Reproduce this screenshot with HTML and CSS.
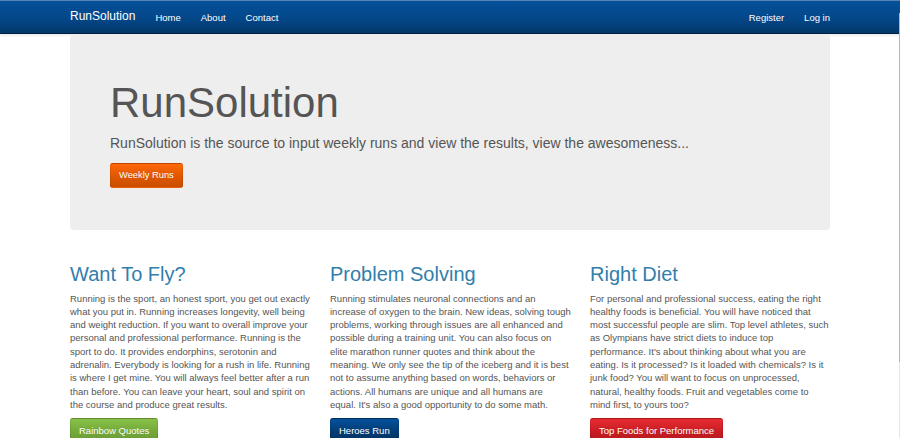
FILE: index.html
```html
<!DOCTYPE html>
<html lang="en">
<head>
<meta charset="utf-8">
<title>RunSolution</title>
<link rel="stylesheet" href="styles.css">
</head>
<body>
<header class="navbar">
  <div class="container nav-inner">
    <a class="brand" href="#">RunSolution</a>
    <ul class="nav">
      <li><a href="#">Home</a></li>
      <li><a href="#">About</a></li>
      <li><a href="#">Contact</a></li>
    </ul>
    <ul class="nav nav-right">
      <li><a href="#">Register</a></li>
      <li><a href="#">Log in</a></li>
    </ul>
  </div>
</header>
<main class="container">
  <section class="jumbotron">
    <h1>RunSolution</h1>
    <p class="lead">RunSolution is the source to input weekly runs and view the results, view the awesomeness...</p>
    <p class="lead-btn"><a class="btn btn-warning" href="#">Weekly Runs</a></p>
  </section>
  <div class="row">
    <div class="col">
      <h2>Want To Fly?</h2>
      <p class="text">Running is the sport, an honest sport, you get out exactly<br>
      what you put in. Running increases longevity, well being<br>
      and weight reduction. If you want to overall improve your<br>
      personal and professional performance. Running is the<br>
      sport to do. It provides endorphins, serotonin and<br>
      adrenalin. Everybody is looking for a rush in life. Running<br>
      is where I get mine. You will always feel better after a run<br>
      than before. You can leave your heart, soul and spirit on<br>
      the course and produce great results.</p>
      <p><a class="btn btn-success" href="#">Rainbow Quotes</a></p>
    </div>
    <div class="col">
      <h2>Problem Solving</h2>
      <p class="text">Running stimulates neuronal connections and an<br>
      increase of oxygen to the brain. New ideas, solving tough<br>
      problems, working through issues are all enhanced and<br>
      possible during a training unit. You can also focus on<br>
      elite marathon runner quotes and think about the<br>
      meaning. We only see the tip of the iceberg and it is best<br>
      not to assume anything based on words, behaviors or<br>
      actions. All humans are unique and all humans are<br>
      equal. It's also a good opportunity to do some math.</p>
      <p><a class="btn btn-info" href="#">Heroes Run</a></p>
    </div>
    <div class="col">
      <h2>Right Diet</h2>
      <p class="text">For personal and professional success, eating the right<br>
      healthy foods is beneficial. You will have noticed that<br>
      most successful people are slim. Top level athletes, such<br>
      as Olympians have strict diets to induce top<br>
      performance. It's about thinking about what you are<br>
      eating. Is it processed? Is it loaded with chemicals? Is it<br>
      junk food? You will want to focus on unprocessed,<br>
      natural, healthy foods. Fruit and vegetables come to<br>
      mind first, to yours too?</p>
      <p><a class="btn btn-danger" href="#">Top Foods for Performance</a></p>
    </div>
  </div>
</main>
<div class="scroll-edge"></div>
</body>
</html>
```
FILE: styles.css
```css
* { box-sizing: border-box; }
html, body { margin: 0; padding: 0; }
body {
  font-family: "Liberation Sans", Arial, sans-serif;
  font-size: 9.333px;
  line-height: 13.333px;
  color: #555;
  background: #fff;
  overflow: hidden;
  position: relative;
  min-height: 438px;
}
a { text-decoration: none; }
.container {
  width: 780px;
  margin: 0 auto;
  padding: 0 10px;
}
.navbar {
  height: 34px;
  background-image: linear-gradient(#04519b, #044687 60%, #033769);
  border-top: 1px solid #5a80b4;
  border-bottom: 1px solid #022241;
  box-shadow: 0 1px 3px rgba(0,0,0,0.12);
}
.nav-inner {
  display: flex;
  align-items: stretch;
  height: 100%;
}
.brand {
  color: #fff;
  font-size: 12px;
  line-height: 13.333px;
  padding: 9px 10px 0 0;
}
.nav {
  list-style: none;
  margin: 0;
  padding: 0;
  display: flex;
}
.nav a {
  display: block;
  color: #fff;
  font-size: 9.5px;
  padding: 10px 10px 0;
  line-height: 13.333px;
}
.nav-right {
  margin-left: auto;
  margin-right: -10px;
}
.jumbotron {
  background: #eee;
  border-radius: 4px;
  padding: 32px 40px;
  margin-top: 1px;
  margin-bottom: 20px;
}
.jumbotron h1 {
  font-size: 42px;
  line-height: 46.2px;
  font-weight: 500;
  color: #555;
  margin: 13.333px 0 6.667px;
}
.jumbotron .lead {
  font-size: 14px;
  line-height: 20px;
  margin: 0 0 10px;
  color: #555;
}
.lead-btn { margin: 0 0 10px; line-height: 20px; }
.row {
  display: flex;
  margin: 0 -10px;
}
.col {
  width: 260px;
  padding: 0 10px;
}
.col h2 {
  font-size: 20px;
  line-height: 22px;
  font-weight: 500;
  color: #317eac;
  margin: 13.333px 0 6.667px;
}
.col p { margin: 0 0 6.667px; font-size: 9.5px; }
.col .text { white-space: nowrap; }
.btn {
  display: inline-block;
  font-size: 9.333px;
  line-height: 13.333px;
  padding: 4.5px 8px;
  border-radius: 2.667px;
  color: #fff;
  text-shadow: 0 -1px 0 rgba(0,0,0,0.1);
  border: 1px solid rgba(0,0,0,0.08);
}
.col .btn { font-size: 9.5px; }
.btn-warning { background-image: linear-gradient(#ff6707, #dd5600 60%, #c94e00); }
.btn-success { background-image: linear-gradient(#88c149, #73a839 60%, #699934); }
.btn-info { background-image: linear-gradient(#04519b, #033c73 60%, #02325f); }
.btn-danger { background-image: linear-gradient(#e72b33, #c71c22 60%, #b5191f); }
.scroll-edge {
  position: absolute;
  right: 0;
  top: 13px;
  width: 1px;
  height: 425px;
  background: linear-gradient(#b4b4b4 0, #b4b4b4 349px, #e6e6e6 349px);
}
```
